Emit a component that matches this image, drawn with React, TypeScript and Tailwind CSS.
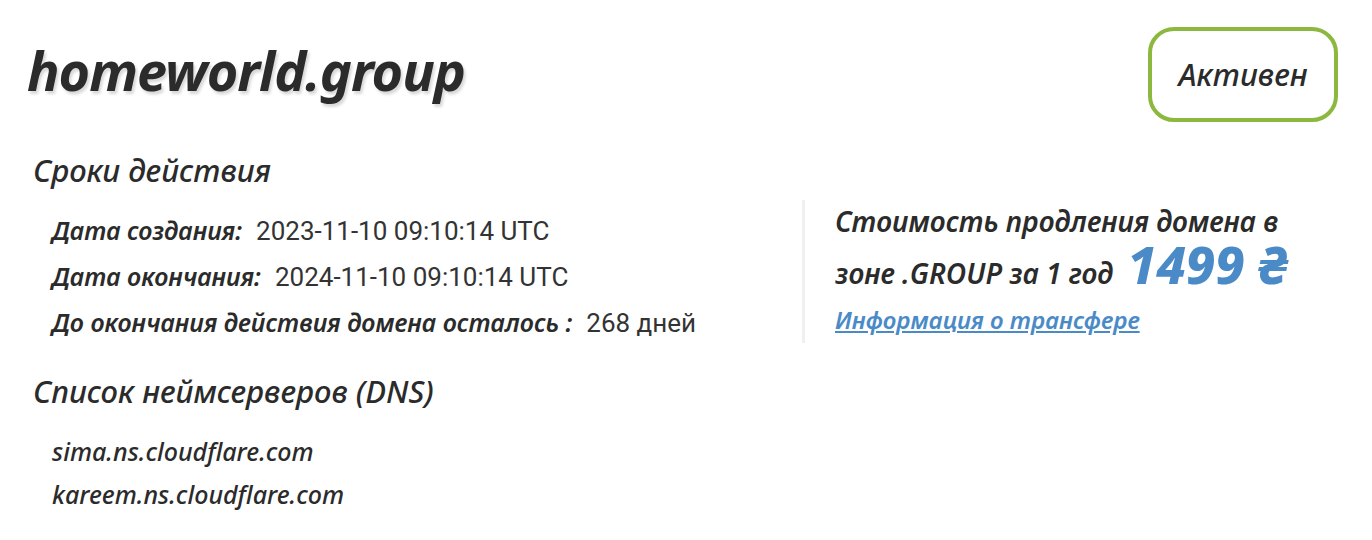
import React from "react";

const dates = [
  { id: 1, label: "Дата создания:", value: "2023-11-10 09:10:14 UTC" },
  { id: 2, label: "Дата окончания:", value: "2024-11-10 09:10:14 UTC" },
  { id: 3, label: "До окончания действия домена осталось :", value: "268 дней" },
];

const dns = ["sima.ns.cloudflare.com", "kareem.ns.cloudflare.com"];

const italic = "font-['Noto_Sans',sans-serif] italic";

export default function App() {
  return (
    <div className="bg-white w-[1372px] h-[540px] text-[#2b2b2b] px-[27px] pt-[27px]">
      <div className="flex justify-between items-start pr-[7px]">
        <h1
          className={`${italic} font-bold text-[54px] leading-none tracking-[-1px] mt-[16px] [text-shadow:2px_3px_3px_#d8d8d8]`}
        >
          homeworld.group
        </h1>
        <div className="w-[190px] h-[95px] border-[4px] border-[#8db83f] rounded-[26px] flex items-center justify-center">
          <span className={`${italic} font-medium text-[31px]`}>Активен</span>
        </div>
      </div>

      <div className="flex mt-[30px]">
        <div className="w-[775px] pl-[6px]">
          <h2 className={`${italic} font-medium text-[31px] leading-[36px]`}>Сроки действия</h2>
          <div className="pl-[19px] mt-[19px] flex flex-col">
            {dates.map((row) => (
              <div key={row.id} className="flex items-baseline gap-[14px] h-[46px] leading-[46px]">
                <span className={`${italic} font-semibold text-[25px]`}>{row.label}</span>
                <span className="font-['Roboto',sans-serif] text-[26px] text-[#333]">{row.value}</span>
              </div>
            ))}
          </div>
        </div>

        <div className="border-l-[3px] border-[#f0f0f0] mt-[48px] h-[143px] pl-[30px]">
          <p className={`${italic} font-semibold text-[28px] leading-[42px]`}>Стоимость продления домена в</p>
          <div className="flex items-baseline gap-[14px] h-[44px]">
            <span className={`${italic} font-semibold text-[28px] leading-[44px]`}>зоне .GROUP за 1 год</span>
            <span className={`${italic} font-extrabold text-[52px] text-[#4a8bc7] leading-[44px]`}>
              1499 ₴
            </span>
          </div>
          <a
            href="#"
            className={`${italic} font-semibold text-[24px] text-[#4a8bc7] underline block leading-[30px] mt-[19px]`}
          >
            Информация о трансфере
          </a>
        </div>
      </div>

      <div className="pl-[6px] mt-[28px]">
        <h2 className={`${italic} font-medium text-[31px] leading-[36px]`}>Список неймсерверов (DNS)</h2>
        <div className="pl-[19px] mt-[21px] flex flex-col">
          {dns.map((d) => (
            <div key={d} className={`${italic} font-medium text-[25px] leading-[43px]`}>
              {d}
            </div>
          ))}
        </div>
      </div>
    </div>
  );
}
